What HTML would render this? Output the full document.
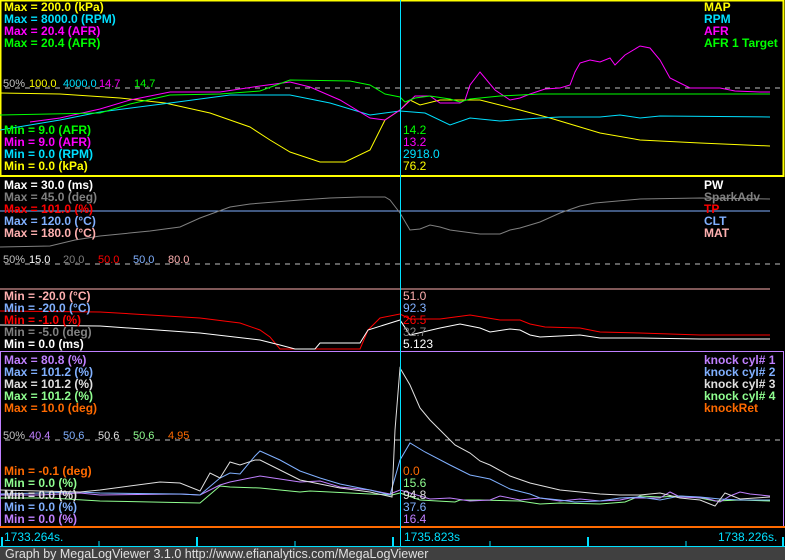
<!DOCTYPE html>
<html><head><meta charset="utf-8"><style>
html,body{margin:0;padding:0;background:#000;width:785px;height:560px;overflow:hidden}
svg{display:block}
.b{font-family:"Liberation Sans",sans-serif;font-weight:bold;font-size:12px}
.n{font-family:"Liberation Sans",sans-serif;font-size:12px}
.s{font-family:"Liberation Sans",sans-serif;font-size:11px}
</style></head><body>
<svg width="785" height="560" xmlns="http://www.w3.org/2000/svg" fill="none">
<rect width="785" height="560" fill="#000"/>
<rect x="0.5" y="0.5" width="783" height="175.5" stroke="#ffff00" stroke-width="2"/>
<line x1="5" y1="88" x2="780" y2="88" stroke="#c0c0c0" stroke-dasharray="5,5"/>
<polyline stroke="#ffff00" points="0,93 60,94 120,98 165,103 210,113 250,127 270,140 290,152 320,162 345,162 370,150 385,120 400,110 410,100 420,105 440,100 480,100 520,110 550,118 580,127 600,133 640,140 700,143 770,146"/>
<polyline stroke="#00e0ff" points="0,130 60,120 100,112 170,103 230,95 290,95 330,103 370,115 400,111 425,113 450,125 470,118 500,121 540,118 560,117 600,117 620,115 640,118 660,116 770,117"/>
<polyline stroke="#ff00ff" points="30,122 60,118 100,109 130,100 170,92 220,92 260,86 290,82 310,87 340,100 370,118 385,120 400,110 415,96 430,96 440,103 460,103 465,100 470,85 480,72 495,90 510,100 520,98 530,94 545,89 560,88 570,85 575,72 580,63 590,60 600,62 610,58 615,65 625,55 640,46 650,48 660,60 670,78 680,83 690,88 720,88 735,91 760,92 770,92"/>
<polyline stroke="#00ff00" points="0,115 50,114 100,113 130,104 170,95 220,94 260,91 290,80 350,81 370,85 385,94 400,97 405,102 415,98 430,96 450,99 460,102 470,99 500,96 540,94 770,94"/>
<g class="b">
<text x="4" y="11" fill="#ffff00">Max = 200.0 (kPa)</text>
<text x="4" y="23" fill="#00e0ff">Max = 8000.0 (RPM)</text>
<text x="4" y="35" fill="#ff00ff">Max = 20.4 (AFR)</text>
<text x="4" y="47" fill="#00ff00">Max = 20.4 (AFR)</text>
<text x="4" y="134" fill="#00ff00">Min = 9.0 (AFR)</text>
<text x="4" y="146" fill="#ff00ff">Min = 9.0 (AFR)</text>
<text x="4" y="158" fill="#00e0ff">Min = 0.0 (RPM)</text>
<text x="4" y="170" fill="#ffff00">Min = 0.0 (kPa)</text>
<text x="704" y="11" fill="#ffff00">MAP</text>
<text x="704" y="23" fill="#00e0ff">RPM</text>
<text x="704" y="35" fill="#ff00ff">AFR</text>
<text x="704" y="47" fill="#00ff00">AFR 1 Target</text>
</g>
<g class="s">
<text x="3" y="87" fill="#c0c0c0">50%</text><text x="29" y="87" fill="#ffff00">100.0</text><text x="63" y="87" fill="#00e0ff">4000.0</text><text x="99" y="87" fill="#ff00ff">14.7</text><text x="134" y="87" fill="#00ff00">14.7</text>
</g>
<g class="n">
<text x="403" y="134" fill="#00ff00">14.2</text>
<text x="403" y="146" fill="#ff00ff">13.2</text>
<text x="403" y="158" fill="#00e0ff">2918.0</text>
<text x="403" y="170" fill="#ffff00">76.2</text>
</g>
<line x1="5" y1="264" x2="780" y2="264" stroke="#c0c0c0" stroke-dasharray="5,5"/>
<line x1="0" y1="211" x2="770" y2="211" stroke="#80b0ff"/>
<line x1="0" y1="289" x2="770" y2="289" stroke="#ffb0b0"/>
<polyline stroke="#808080" points="0,247 50,246 75,240 100,236 150,231 180,227 200,218 230,207 250,204 300,200 330,198 360,197 385,197 390,200 400,213 410,230 420,229 430,225 440,227 450,230 480,234 500,234 510,230 520,228 540,222 560,213 580,206 595,203 640,199 700,198 770,199"/>
<polyline stroke="#ff0000" points="0,311 100,312 200,318 240,323 260,330 270,337 280,349 360,349 368,330 380,318 400,314 410,319 440,319 470,315 500,320 520,320 530,324 545,327 580,328 600,332 640,333 700,335 770,335"/>
<polyline stroke="#ffffff" points="0,325 100,326 200,333 260,340 280,345 295,349 315,349 320,343 360,343 368,330 400,320 410,335 440,328 460,324 480,328 490,332 510,329 520,330 530,335 540,337 580,335 600,338 640,338 700,339 770,339"/>
<g class="b">
<text x="4" y="189" fill="#ffffff">Max = 30.0 (ms)</text>
<text x="4" y="201" fill="#808080">Max = 45.0 (deg)</text>
<text x="4" y="213" fill="#ff0000">Max = 101.0 (%)</text>
<text x="4" y="225" fill="#80b0ff">Max = 120.0 (°C)</text>
<text x="4" y="237" fill="#ffb0b0">Max = 180.0 (°C)</text>
<text x="4" y="300" fill="#ffb0b0">Min = -20.0 (°C)</text>
<text x="4" y="312" fill="#80b0ff">Min = -20.0 (°C)</text>
<text x="4" y="324" fill="#ff0000">Min = -1.0 (%)</text>
<text x="4" y="336" fill="#808080">Min = -5.0 (deg)</text>
<text x="4" y="348" fill="#ffffff">Min = 0.0 (ms)</text>
<text x="704" y="189" fill="#ffffff">PW</text>
<text x="704" y="201" fill="#808080">SparkAdv</text>
<text x="704" y="213" fill="#ff0000">TP</text>
<text x="704" y="225" fill="#80b0ff">CLT</text>
<text x="704" y="237" fill="#ffb0b0">MAT</text>
</g>
<g class="s">
<text x="3" y="263" fill="#c0c0c0">50%</text><text x="29" y="263" fill="#ffffff">15.0</text><text x="63" y="263" fill="#808080">20.0</text><text x="98" y="263" fill="#ff0000">50.0</text><text x="133" y="263" fill="#80b0ff">50.0</text><text x="168" y="263" fill="#ffb0b0">80.0</text>
</g>
<g class="n">
<text x="403" y="300" fill="#ffb0b0">51.0</text>
<text x="403" y="312" fill="#80b0ff">92.3</text>
<text x="403" y="324" fill="#ff0000">26.5</text>
<text x="403" y="336" fill="#808080">32.7</text>
<text x="403" y="348" fill="#ffffff">5.123</text>
</g>
<rect x="0.5" y="351.5" width="783" height="176" stroke="#c080ff"/>
<line x1="5" y1="440" x2="780" y2="440" stroke="#c0c0c0" stroke-dasharray="5,5"/>
<line x1="0" y1="527" x2="785" y2="527" stroke="#ff6a00" stroke-width="2"/>
<polyline stroke="#90ff90" points="0,498 20,498 50,498 100,501 200,503 220,486 230,487 260,488 300,492 310,491 330,492 370,494 392,495 400,493 420,500 455,502 460,500 480,500 520,501 540,504 560,503 600,504 625,502 640,496 660,497 680,496 700,498 715,501 740,500 770,501"/>
<polyline stroke="#c080ff" points="0,495 20,495 40,495 80,493 100,495 180,494 200,495 220,485 230,482 240,480 260,476 280,479 300,482 320,481 340,487 370,490 390,494 395,492 400,490 430,499 450,498 470,501 490,500 500,496 520,500 540,498 560,501 580,499 600,501 620,500 630,498 640,498 660,498 670,492 680,497 705,498 720,502 730,496 740,492 750,494 770,496"/>
<polyline stroke="#80b0ff" points="0,494 80,492 100,493 180,494 200,495 220,478 230,473 240,474 255,456 260,451 280,460 300,471 320,478 340,484 370,490 390,495 400,460 410,443 425,452 450,465 470,475 490,479 510,489 530,494 540,498 560,500 575,502 600,501 620,498 640,497 660,500 680,496 700,497 720,499 740,500 770,500"/>
<polyline stroke="#e0e0e0" points="0,490 80,492 100,490 160,482 180,483 200,491 210,473 220,478 230,462 240,465 255,460 260,460 280,470 300,480 340,488 370,492 392,497 395,430 400,368 410,385 420,408 430,420 440,430 455,445 470,453 480,461 490,465 510,476 530,483 560,490 600,494 620,495 640,495 660,493 680,498 700,500 715,506 725,493 740,499 770,497"/>
<g class="b">
<text x="4" y="364" fill="#c080ff">Max = 80.8 (%)</text>
<text x="4" y="376" fill="#80b0ff">Max = 101.2 (%)</text>
<text x="4" y="388" fill="#e0e0e0">Max = 101.2 (%)</text>
<text x="4" y="400" fill="#90ff90">Max = 101.2 (%)</text>
<text x="4" y="412" fill="#ff6a00">Max = 10.0 (deg)</text>
<text x="4" y="475" fill="#ff6a00">Min = -0.1 (deg)</text>
<text x="4" y="487" fill="#90ff90">Min = 0.0 (%)</text>
<text x="4" y="499" fill="#e0e0e0">Min = 0.0 (%)</text>
<text x="4" y="511" fill="#80b0ff">Min = 0.0 (%)</text>
<text x="4" y="523" fill="#c080ff">Min = 0.0 (%)</text>
<text x="704" y="364" fill="#c080ff">knock cyl# 1</text>
<text x="704" y="376" fill="#80b0ff">knock cyl# 2</text>
<text x="704" y="388" fill="#e0e0e0">knock cyl# 3</text>
<text x="704" y="400" fill="#90ff90">knock cyl# 4</text>
<text x="704" y="412" fill="#ff6a00">knockRet</text>
</g>
<g class="s">
<text x="3" y="439" fill="#c0c0c0">50%</text><text x="29" y="439" fill="#c080ff">40.4</text><text x="63" y="439" fill="#80b0ff">50.6</text><text x="98" y="439" fill="#e0e0e0">50.6</text><text x="133" y="439" fill="#90ff90">50.6</text><text x="168" y="439" fill="#ff6a00">4.95</text>
</g>
<g class="n">
<text x="403" y="475" fill="#ff6a00">0.0</text>
<text x="403" y="487" fill="#90ff90">15.6</text>
<text x="403" y="499" fill="#e0e0e0">94.8</text>
<text x="403" y="511" fill="#80b0ff">37.6</text>
<text x="403" y="523" fill="#c080ff">16.4</text>
</g>
<line x1="0" y1="546.5" x2="785" y2="546.5" stroke="#00e0ff"/>
<g stroke="#00e0ff" stroke-width="2">
<line x1="2" y1="537" x2="2" y2="546"/><line x1="197" y1="537" x2="197" y2="546"/><line x1="393" y1="537" x2="393" y2="546"/><line x1="588" y1="537" x2="588" y2="546"/><line x1="783" y1="537" x2="783" y2="546"/>
</g>
<g stroke="#00e0ff">
<line x1="99" y1="541" x2="99" y2="546"/><line x1="295" y1="541" x2="295" y2="546"/><line x1="490" y1="541" x2="490" y2="546"/><line x1="686" y1="541" x2="686" y2="546"/>
</g>
<g class="n" fill="#00e0ff">
<text x="4" y="541">1733.264s.</text>
<text x="404" y="541">1735.823s</text>
<text x="718" y="541">1738.226s.</text>
</g>
<line x1="400.5" y1="0" x2="400.5" y2="547" stroke="#00e0ff"/>
<rect x="0" y="547" width="785" height="13" fill="#404040"/>
<text class="n" x="5" y="558" fill="#e0e0e0" style="font-size:12.5px">Graph by MegaLogViewer 3.1.0 http://www.efianalytics.com/MegaLogViewer</text>
</svg>
</body></html>
